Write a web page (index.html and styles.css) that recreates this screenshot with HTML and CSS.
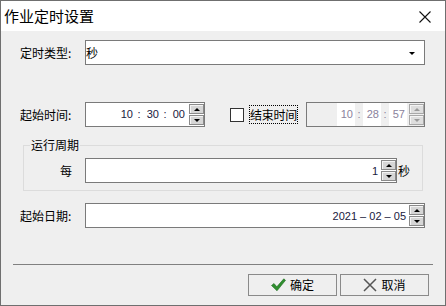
FILE: index.html
```html
<!DOCTYPE html>
<html>
<head>
<meta charset="utf-8">
<link rel="stylesheet" href="styles.css">
</head>
<body>
<div class="window">
  <div class="titlebar">
    <span class="title">作业定时设置</span>
    <svg class="close" width="12" height="12" viewBox="0 0 12 12"><path d="M0.5 0.5 L11.5 11.5 M11.5 0.5 L0.5 11.5" stroke="#111" stroke-width="1.1" fill="none"/></svg>
  </div>
  <div class="content">
    <div class="row r1">
      <span class="label">定时类型:</span>
      <div class="field combo"><span class="combo-text">秒</span><span class="caret"></span></div>
    </div>
    <div class="row r2">
      <span class="label">起始时间:</span>
      <div class="field time start">
        <span class="seg">10</span><span class="colon">:</span><span class="seg">30</span><span class="colon">:</span><span class="seg">00</span>
        <div class="spin"><span class="sbtn up"><i></i></span><span class="sbtn down"><i></i></span></div>
      </div>
      <span class="checkbox"></span>
      <span class="chklabel">结束时间</span>
      <div class="field time end disabled">
        <span class="seg">10</span><span class="colon">:</span><span class="seg">28</span><span class="colon">:</span><span class="seg">57</span>
        <div class="spin"><span class="sbtn up"><i></i></span><span class="sbtn down"><i></i></span></div>
      </div>
    </div>
    <div class="group">
      <span class="legend">运行周期</span>
      <div class="row grow">
        <span class="glabel">每</span>
        <div class="field every">
          <span class="num">1</span>
          <div class="spin"><span class="sbtn up"><i></i></span><span class="sbtn down"><i></i></span></div>
        </div>
        <span class="unit">秒</span>
      </div>
    </div>
    <div class="row r5">
      <span class="label">起始日期:</span>
      <div class="field date">
        <span class="num">2021 – 02 – 05</span>
        <div class="spin"><span class="sbtn up"><i></i></span><span class="sbtn down"><i></i></span></div>
      </div>
    </div>
    <div class="sep"></div>
    <div class="buttons">
      <button class="btn"><svg width="15" height="14" viewBox="0 0 15 14"><path d="M0.5 7.5 L3 5.5 L5.8 8.8 L12.8 0.8 L14.5 2.3 L6 12.8 Z" fill="#2f8f2f" stroke="#1f6a1f" stroke-width="0.6"/></svg><span>确定</span></button>
      <button class="btn"><svg width="14" height="14" viewBox="0 0 14 14"><path d="M1 1 L13 13 M13 1 L1 13" stroke="#555" stroke-width="1.5" fill="none"/></svg><span>取消</span></button>
    </div>
  </div>
</div>
</body>
</html>
```
FILE: styles.css
```css
* { box-sizing: border-box; }
html, body { margin: 0; padding: 0; }
body {
  width: 446px;
  height: 306px;
  font-family: "Noto Sans CJK SC", "Liberation Sans", sans-serif;
  font-size: 12px;
  color: #000;
  background: #efefef;
}
.window {
  width: 446px;
  height: 306px;
  border: 1px solid #6f6f6f;
  background: #efefef;
  display: flex;
  flex-direction: column;
}
.titlebar {
  height: 30px;
  background: #fff;
  display: flex;
  align-items: center;
  justify-content: space-between;
  padding: 0 14px 0 3px;
  flex: none;
}
.title {
  font-size: 15px;
  line-height: 18px;
  color: #000;
}
.close { display: block; margin-top: 1px; }
.content {
  padding: 9px 20px 0 19px;
  display: flex;
  flex-direction: column;
}
.row {
  display: flex;
  align-items: center;
  height: 25px;
}
.label {
  width: 65px;
  line-height: 16px;
  flex: none;
  white-space: nowrap;
}
.field {
  height: 25px;
  border: 1px solid #7a7a7a;
  background: #fff;
  display: flex;
  align-items: center;
  flex: none;
}
.combo {
  width: 340px;
  justify-content: space-between;
  padding: 0 9px 0 0;
}
.combo-text { line-height: 16px; padding-left: 0; }
.caret {
  width: 0; height: 0;
  border-left: 3px solid transparent;
  border-right: 3px solid transparent;
  border-top: 3px solid #000;
  margin-top: 1px;
}
.r2 { margin-top: 37px; }
.time {
  justify-content: flex-end;
  font-family: "Liberation Sans", sans-serif;
  font-size: 11px;
  color: #1a1a40;
}
.start { width: 120px; }
.end { width: 119px; margin-left: auto; }
.seg {
  width: 18px;
  text-align: right;
  padding-right: 2px;
  line-height: 23px;
}
.colon {
  width: 8px;
  text-align: center;
  line-height: 23px;
}
.disabled { background: #efefef; color: #8a829c; }
.disabled .seg { background: #fff; }
.spin {
  width: 15px;
  height: 23px;
  padding: 1px 0;
  margin-left: 2px;
  display: flex;
  flex-direction: column;
  justify-content: space-between;
  flex: none;
}
.sbtn {
  height: 10px;
  border: 1px solid #8a8a8a;
  background: #d6d6d6;
  box-shadow: inset 1px 1px 0 #f4f4f4;
  display: flex;
  align-items: center;
  justify-content: center;
}
.sbtn i {
  width: 0; height: 0;
  border-left: 3px solid transparent;
  border-right: 3px solid transparent;
}
.up i { border-bottom: 3px solid #000; }
.down i { border-top: 3px solid #000; }
.disabled .sbtn { border-color: #a8a8a8; background: #dedede; }
.disabled .up i { border-bottom-color: #9a9a9a; }
.disabled .down i { border-top-color: #9a9a9a; }
.checkbox {
  width: 14px;
  height: 14px;
  border: 1px solid #333;
  background: #fff;
  margin-left: 25px;
  flex: none;
}
.chklabel {
  margin-left: 5px;
  border: 1px dotted #000;
  line-height: 17px;
  padding: 0;
  white-space: nowrap;
  flex: none;
  letter-spacing: -0.25px;
}
.group {
  margin: 18px 2px 0 3px;
  border: 1px solid #dcdcdc;
  padding: 12px 0 7px 0;
  position: relative;
}
.legend {
  position: absolute;
  left: 6px;
  top: -9px;
  background: #efefef;
  padding: 0 1px;
  line-height: 16px;
}
.glabel {
  width: 61px;
  text-align: right;
  padding-right: 13px;
  line-height: 16px;
  flex: none;
}
.every { width: 312px; justify-content: flex-end; }
.num {
  font-family: "Liberation Sans", sans-serif;
  font-size: 11px;
  color: #1a1a40;
  padding-right: 2px;
}
.every .num { padding-right: 1px; }
.unit { margin-left: 1px; line-height: 16px; }
.r5 { margin-top: 12px; }
.date { width: 340px; justify-content: flex-end; }
.date .num { padding-right: 1px; }
.sep {
  height: 1px;
  background: #808080;
  margin: 36px -8px 0 -7px;
}
.buttons {
  margin: 9px -4px 0 0;
  display: flex;
  justify-content: flex-end;
  gap: 3px;
}
.btn {
  width: 89px;
  height: 22px;
  border: 1px solid #8a8a8a;
  background: #efefef;
  display: flex;
  align-items: center;
  justify-content: center;
  gap: 4px;
  padding: 0;
  font-family: "Noto Sans CJK SC", sans-serif;
  font-size: 12px;
  color: #000;
}
.btn svg { display: block; }
.btn span { line-height: 16px; }
```
